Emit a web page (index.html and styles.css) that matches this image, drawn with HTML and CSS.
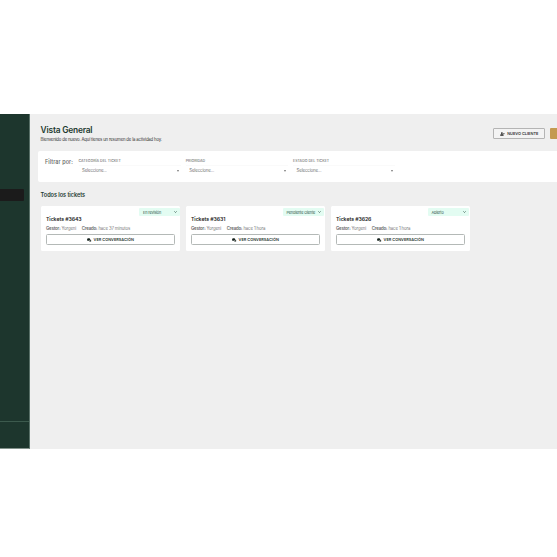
FILE: index.html
```html
<!DOCTYPE html>
<html lang="es">
<head>
<meta charset="utf-8">
<title>Vista General</title>
<link rel="stylesheet" href="styles.css">
</head>
<body>
<svg class="defs" aria-hidden="true">
  <symbol id="chat" viewBox="0 0 12 10"><path d="M4.4.5C2 .5.2 2 .2 3.8c0 .8.3 1.500.9 2L.4 7.500l2.100-.7c.6.2 1.200.3 1.900.3 2.400 0 4.200-1.500 4.200-3.300S6.800.5 4.400.5Z"/><path d="M9.300 3.400c.2 2.600-2 4.500-4.700 4.500.7.8 1.800 1.200 3 1.200.6 0 1.200-.1 1.700-.3l2.200.8-.7-1.700c.5-.5.9-1.100.9-1.800 0-1.300-1-2.300-2.400-2.700Z"/></symbol>
  <symbol id="user" viewBox="0 0 12 10"><circle cx="4.500" cy="2.700" r="2.300"/><path d="M.3 9.500V8.200c0-1.600 1.300-2.600 2.800-2.600h2.800c1.500 0 2.800 1 2.800 2.600v1.300ZM9 2.700h1v1.200h1.300v1H10v1.300H9V4.900H7.800v-1H9Z"/></symbol>
  <symbol id="chevron" viewBox="0 0 6 4"><path d="m.7.700 2.300 2.300L5.300.7" fill="none" stroke="currentColor" stroke-width="1.400"/></symbol>
</svg>
<div class="app">
  <aside class="sidebar">
    <div class="nav-active"></div>
    <div class="sidebar-foot"></div>
  </aside>
  <main class="main">
    <header class="header">
      <div>
        <h1>Vista General</h1>
        <p class="welcome">Bienvenido de nuevo. Aquí tienes un resumen de la actividad hoy.</p>
      </div>
      <div class="actions">
        <button class="new-client"><svg><use href="#user"/></svg><span>NUEVO CLIENTE</span></button>
        <button class="primary" aria-hidden="true"></button>
      </div>
    </header>
    <section class="filters">
      <span class="filters-title">Filtrar por:</span>
      <div class="field"><label>CATEGORÍA DEL TICKET</label><div class="select"><span>Seleccione...</span><i></i></div></div>
      <div class="field"><label>PRIORIDAD</label><div class="select"><span>Seleccione...</span><i></i></div></div>
      <div class="field"><label>ESTADO DEL TICKET</label><div class="select"><span>Seleccione...</span><i></i></div></div>
    </section>
    <h2>Todos los tickets</h2>
    <section class="tickets">
      <article class="card">
        <div class="status flush"><span>En revisión</span><svg><use href="#chevron"/></svg></div>
        <h3>Tickets #3643</h3>
        <p class="meta"><span><b>Gestor:</b> Yorgeni</span><span><b>Creado:</b> hace 37 minutos</span></p>
        <button class="view"><svg><use href="#chat"/></svg><span>VER CONVERSACIÓN</span></button>
      </article>
      <article class="card">
        <div class="status"><span>Pendiente cliente</span><svg><use href="#chevron"/></svg></div>
        <h3>Tickets #3631</h3>
        <p class="meta"><span><b>Gestor:</b> Yorgeni</span><span><b>Creado:</b> hace 1 hora</span></p>
        <button class="view"><svg><use href="#chat"/></svg><span>VER CONVERSACIÓN</span></button>
      </article>
      <article class="card">
        <div class="status"><span>Abierto</span><svg><use href="#chevron"/></svg></div>
        <h3>Tickets #3626</h3>
        <p class="meta"><span><b>Gestor:</b> Yorgeni</span><span><b>Creado:</b> hace 1 hora</span></p>
        <button class="view"><svg><use href="#chat"/></svg><span>VER CONVERSACIÓN</span></button>
      </article>
    </section>
  </main>
</div>
</body>
</html>
```
FILE: styles.css
```css
* { box-sizing: border-box; }
body { margin: 0; padding-top: 114px; height: 557px; overflow: hidden; background: #fff; font-family: Inter, "Liberation Sans", sans-serif; color: #444; }
h1, h2, h3, p { margin: 0; white-space: nowrap; }
button { font: inherit; padding: 0; display: flex; align-items: center; justify-content: center; white-space: nowrap; }
.defs { display: none; }
.app { display: flex; width: 557px; height: 335px; background: #efefef; overflow: hidden; }
.sidebar { width: 30px; flex: none; background: #1d362d; border-right: 1px solid #587067; border-bottom: 1px solid #82928b; display: flex; flex-direction: column; padding-top: 75px; }
.nav-active { width: 24px; height: 12px; background: #1b1b1b; border-radius: 0 1px 1px 0; }
.sidebar-foot { margin-top: auto; height: 27px; border-top: 1px solid #3c5a4d; }
.main { flex: none; width: 527px; padding-left: 8px; }
.header { height: 37px; padding: 11px 0 0 2.6px; display: flex; justify-content: space-between; }
h1 { font-size: 8.4px; line-height: 11px; font-weight: 600; letter-spacing: -.2px; color: #1d3a2f; }
.welcome { font-size: 4.3px; line-height: 6px; margin-top: 1px; letter-spacing: -.185px; color: #333; }
.actions { display: flex; gap: 5px; padding-top: 3px; }
.new-client { width: 52px; height: 11px; border: 1px solid #b4b4b4; border-radius: 1px; background: #f3f3f3; color: #333; font-size: 3.9px; font-weight: 600; gap: 2.5px; }
.new-client svg { width: 5px; height: 4px; fill: #222; }
.primary { width: 7px; height: 11px; border: 0; background: #c49a50; border-radius: 1px 0 0 1px; }
.filters { height: 31px; background: #fff; border-radius: 2px 0 0 2px; padding: 6px 0 0 7px; display: flex; }
.filters-title { width: 33.5px; font-size: 5.5px; line-height: 10px; font-weight: 500; letter-spacing: .06px; color: #666; white-space: nowrap; }
.field { width: 107.3px; }
label { display: block; font-size: 3.6px; line-height: 8px; font-weight: 500; color: #777; white-space: nowrap; }
.select { width: 102px; height: 10px; padding: 0 2px 0 3.5px; border-top: 1px solid #fafafa; display: flex; align-items: center; justify-content: space-between; font-size: 4.4px; color: #777; letter-spacing: -.15px; }
.select i { width: 0; height: 0; border: 1.5px solid transparent; border-top: 2px solid #777; border-bottom: 0; }
h2 { padding-left: 2.6px; margin-top: 9px; font-size: 5.6px; line-height: 9px; font-weight: 600; letter-spacing: -.06px; color: #1d3a2f; }
.tickets { display: flex; gap: 6px; margin: 6px 0 0 3px; }
.card { width: 139px; height: 44.5px; border-radius: 1.5px; background: #fff; padding: 2px 0 0 5px; }
.status { width: 41px; height: 8px; margin: 0 1.5px 0 auto; padding: 0 2.5px 0 4px; background: #e3fcf2; border-radius: 1px; display: flex; align-items: center; justify-content: space-between; font-size: 3.8px; letter-spacing: -.14px; color: #31584b; white-space: nowrap; }
.status.flush { margin-right: 0; padding-right: 3.5px; }
.status svg { width: 3px; height: 2px; color: #31584b; flex: none; }
h3 { font-size: 5.2px; line-height: 7px; font-weight: 600; letter-spacing: -.06px; color: #222; }
.meta { margin-top: 2.5px; display: flex; gap: 5.5px; font-size: 4.3px; line-height: 6px; letter-spacing: -.12px; color: #777; }
.meta b { font-weight: 600; color: #666; }
.view { width: 129px; height: 11px; margin-top: 2.5px; border: 1px solid #b4b9b7; border-radius: 1.5px; background: #fff; color: #2a3831; font-size: 3.9px; font-weight: 600; gap: 2px; }
.view svg { width: 4.5px; height: 4px; fill: #17231e; }
```
